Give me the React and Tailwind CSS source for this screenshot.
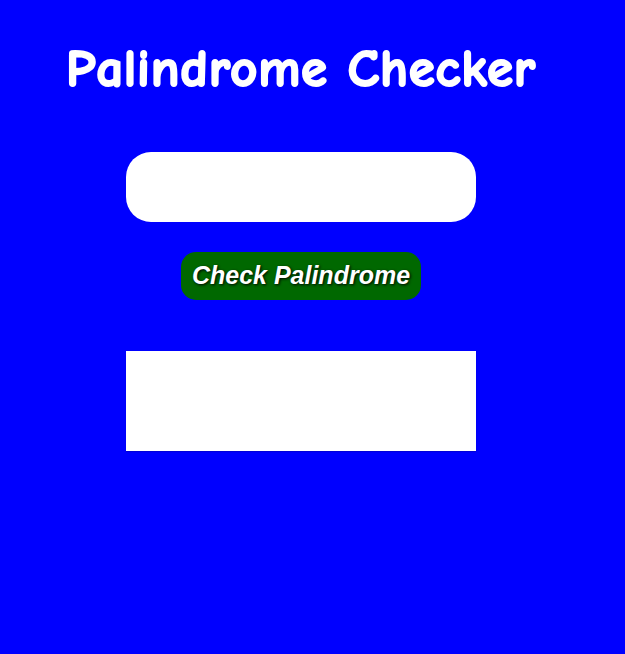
import React, { useState } from "react";

export default function App() {
  const [text, setText] = useState("");
  const [result, setResult] = useState("");

  const checkPalindrome = () => {
    const clean = text.toLowerCase().replace(/[^a-z0-9]/g, "");
    if (!clean) {
      setResult("");
      return;
    }
    const reversed = clean.split("").reverse().join("");
    setResult(clean === reversed ? `"${text}" is a palindrome` : `"${text}" is not a palindrome`);
  };

  return (
    <div className="min-h-[654px] w-full bg-[#0000ff]">
      <div className="flex w-[602px] flex-col items-center">
        <h1
          className="mt-[34px] text-[53px] leading-[70px] font-bold tracking-[0.75px] text-white [-webkit-text-stroke:2px_white]"
          style={{ fontFamily: "'Comic Sans MS', 'Comic Neue', 'Noto Sans', sans-serif" }}
        >
          Palindrome Checker
        </h1>
        <input
          type="text"
          value={text}
          onChange={(e) => setText(e.target.value)}
          className="mt-[48px] h-[70px] w-[350px] rounded-[25px] bg-white px-5 text-xl outline-none"
        />
        <button
          onClick={checkPalindrome}
          className="mt-[30px] h-[48px] rounded-[15px] bg-[#006800] px-[11px] text-[25px] font-bold italic text-white [text-shadow:1px_1px_3px_#000]"
          style={{ fontFamily: "'Liberation Sans', Arial, sans-serif" }}
        >
          Check Palindrome
        </button>
        <div
          className="mt-[51px] h-[100px] w-[350px] bg-white p-3 text-lg shadow-[0_1px_1px_rgba(0,0,0,0.15)]"
          style={{ fontFamily: "'Liberation Sans', Arial, sans-serif" }}
        >
          {result}
        </div>
      </div>
    </div>
  );
}
